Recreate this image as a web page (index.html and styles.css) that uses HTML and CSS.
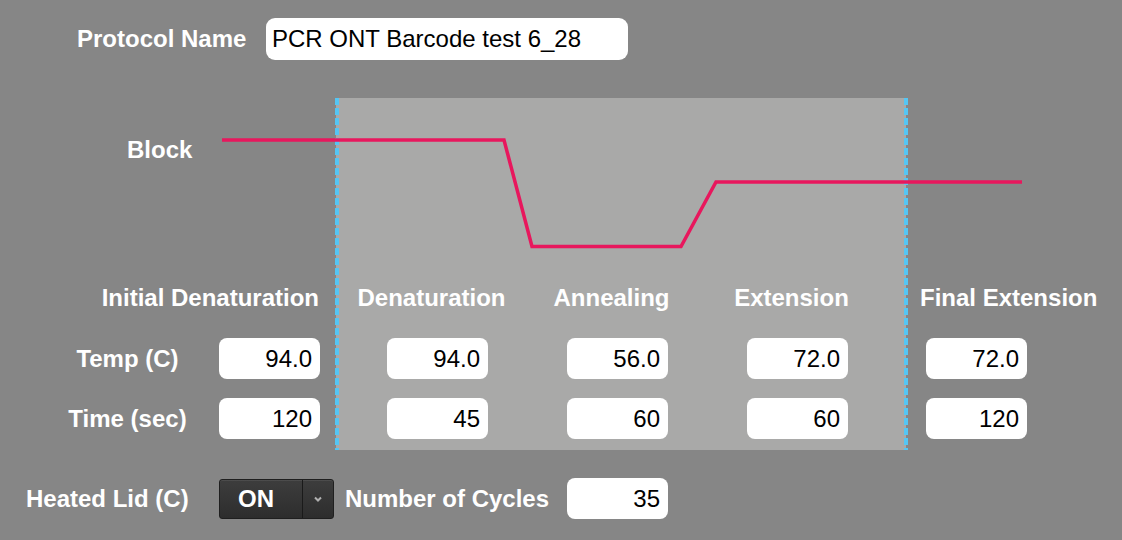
FILE: index.html
```html
<!DOCTYPE html>
<html lang="en">
<head>
  <meta charset="utf-8">
  <title>PCR Protocol</title>
  <link rel="stylesheet" href="styles.css">
</head>
<body>
  <div class="top">
    <label for="name" class="name-label">Protocol Name</label>
    <input type="text" id="name" class="name-input" value="PCR ONT Barcode test 6_28">
  </div>

  <div class="program">
    <div class="side lead">
      <div class="graph-space"><span class="block-label">Block</span></div>
      <div class="step-title lead-title">Initial Denaturation</div>
      <div class="row temp">
        <span class="row-label">Temp (C)</span>
        <input type="text" class="num" value="94.0">
      </div>
      <div class="row time">
        <span class="row-label">Time (sec)</span>
        <input type="text" class="num" value="120">
      </div>
    </div>

    <div class="band">
      <div class="step">
        <div class="graph-space"></div>
        <div class="step-title"><span>Denaturation</span></div>
        <div class="row temp"><input type="text" class="num" value="94.0"></div>
        <div class="row time"><input type="text" class="num" value="45"></div>
      </div>
      <div class="step">
        <div class="graph-space"></div>
        <div class="step-title"><span>Annealing</span></div>
        <div class="row temp"><input type="text" class="num" value="56.0"></div>
        <div class="row time"><input type="text" class="num" value="60"></div>
      </div>
      <div class="step">
        <div class="graph-space"></div>
        <div class="step-title"><span>Extension</span></div>
        <div class="row temp"><input type="text" class="num" value="72.0"></div>
        <div class="row time"><input type="text" class="num" value="60"></div>
      </div>
    </div>

    <div class="side tail">
      <div class="graph-space"></div>
      <div class="step-title tail-title">Final Extension</div>
      <div class="row temp"><input type="text" class="num" value="72.0"></div>
      <div class="row time"><input type="text" class="num" value="120"></div>
    </div>

    <svg class="profile" width="1122" height="352" viewBox="0 0 1122 352">
      <line x1="337" y1="0" x2="337" y2="352" stroke="#55c6f4" stroke-width="4" stroke-dasharray="7 3" />
      <line x1="906" y1="0" x2="906" y2="352" stroke="#55c6f4" stroke-width="4" stroke-dasharray="7 3" />
      <polyline class="temp-line" points="222,42 504,42 532,148.5 681,148.5 716,84 1022,84" />
    </svg>
  </div>

  <div class="lid-row">
    <span class="lid-label">Heated Lid (C)</span>
    <div class="select">
      <span class="select-value">ON</span>
      <span class="select-arrow">
        <svg width="8" height="6" viewBox="0 0 8 6"><path d="M1 1.5 L4 4.5 L7 1.5" /></svg>
      </span>
    </div>
    <span class="cycles-label">Number of Cycles</span>
    <input type="text" class="num" value="35">
  </div>
</body>
</html>
```

FILE: styles.css
```css
html,
body {
  margin: 0;
  padding: 0;
}
body {
  width: 1122px;
  height: 540px;
  overflow: hidden;
  background: #868686;
  color: #fff;
  font-family: "Liberation Sans", Arial, sans-serif;
  font-size: 24px;
  font-weight: bold;
  line-height: 28px;
}
input[type="text"] {
  box-sizing: border-box;
  border: none;
  outline: none;
  margin: 0;
  background: #fff;
  color: #000;
  font-family: inherit;
  font-size: 24px;
  font-weight: normal;
}

/* protocol name */
.top {
  display: flex;
  align-items: center;
  padding: 18px 0 0 77px;
}
.name-label {
  width: 189px;
}
.name-input {
  width: 362px;
  height: 42px;
  padding: 0 6px;
  border-radius: 9px;
}

/* steps */
.program {
  position: relative;
  display: flex;
  height: 352px;
  margin-top: 38px;
}
.graph-space {
  height: 186px;
}
.block-label {
  display: block;
  padding: 38px 0 0 127px;
}
.step-title {
  height: 28px;
  white-space: nowrap;
}
.row {
  display: flex;
}
.row.temp {
  margin-top: 26px;
}
.row.time {
  margin-top: 19px;
}
.num {
  width: 101px;
  height: 41px;
  padding: 0 8px;
  border-radius: 8px;
  text-align: right;
}
.lead {
  width: 336px;
}
.lead-title {
  text-align: right;
  padding-right: 17px;
}
.row-label {
  box-sizing: border-box;
  width: 219px;
  padding-left: 36px;
  text-align: center;
  line-height: 41px;
}
.band {
  display: flex;
  gap: 79px;
  width: 570px;
  box-sizing: border-box;
  padding-left: 51px;
  background: #a9a9a8;
}
.step {
  width: 101px;
}
.step .step-title {
  display: flex;
  justify-content: center;
}
.step .step-title span {
  padding-right: 12px;
}
.tail {
  padding-left: 20px;
}
.tail-title {
  margin-left: -6px;
}
.profile {
  position: absolute;
  left: 0;
  top: 0;
  pointer-events: none;
}
.temp-line {
  fill: none;
  stroke: #e8175d;
  stroke-width: 3.5;
  stroke-linejoin: miter;
}

/* lid and cycles */
.lid-row {
  display: flex;
  align-items: center;
  margin-top: 28px;
  padding-left: 26px;
}
.lid-label {
  width: 193px;
}
.select {
  display: flex;
  width: 115px;
  height: 40px;
  box-sizing: border-box;
  border: 1px solid #1f1f1f;
  border-radius: 3px;
  background: linear-gradient(#3d3d3d, #2d2d2d);
  box-shadow: inset 0 1px 0 rgba(255, 255, 255, 0.08);
}
.select-value {
  width: 82px;
  box-sizing: border-box;
  padding-left: 18px;
  line-height: 38px;
}
.select-arrow {
  display: flex;
  flex: 1;
  align-items: center;
  justify-content: center;
  border-left: 1px solid #1a1a1a;
}
.select-arrow path {
  fill: none;
  stroke: #b0b0b0;
  stroke-width: 2;
}
.cycles-label {
  width: 222px;
  margin-left: 11px;
}
```
